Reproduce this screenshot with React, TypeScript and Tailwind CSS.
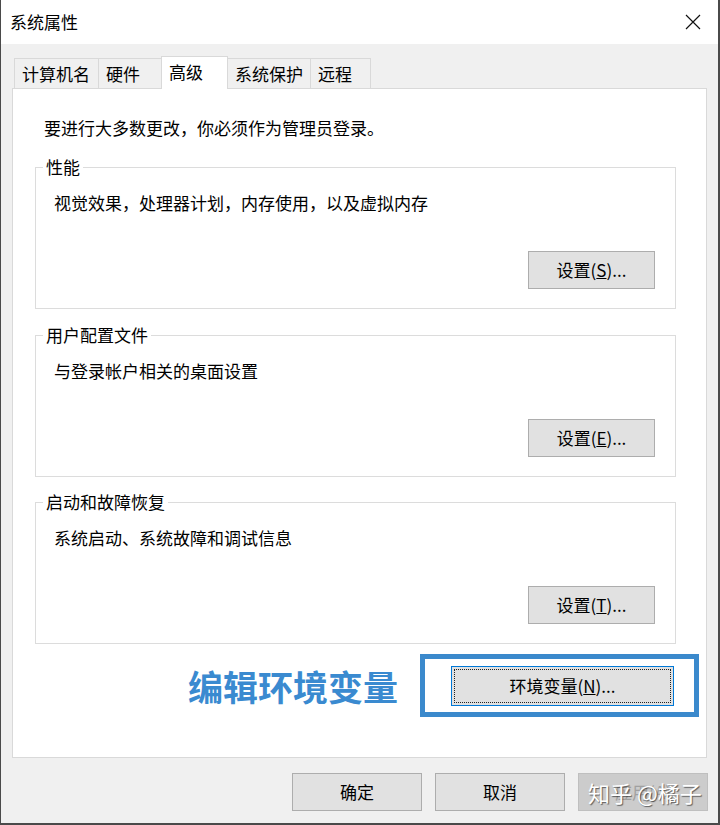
import type { ReactNode } from 'react';

const FONT = { fontFamily: '"Microsoft YaHei UI", "Noto Sans CJK SC", "Noto Sans", sans-serif' };

const tabs = [
  { label: '计算机名', w: 'w-[85px]' },
  { label: '硬件', w: 'w-[64px]' },
  { label: '高级', w: 'w-[67px]', active: true },
  { label: '系统保护', w: 'w-[84px]' },
  { label: '远程', w: 'w-[61px]' },
];

function Btn({ children, className = '' }: { children: ReactNode; className?: string }) {
  return (
    <button className={`flex items-center justify-center bg-[#e1e1e1] border border-[#adadad] text-[17px] leading-[22px] text-black ${className}`}>
      {children}
    </button>
  );
}

function Group({ title, desc, btn, keyChar }: { title: string; desc: string; btn: string; keyChar: string }) {
  return (
    <fieldset className="ml-[22px] w-[641px] border border-[#dcdcdc] pl-[7px] pr-[20px] pb-[19px]">
      <legend className="px-[3px] text-[17px] leading-[22px]">{title}</legend>
      <div className="mt-[14px] ml-[11px] text-[17px] leading-[22px]">{desc}</div>
      <div className="mt-[37px] flex justify-end">
        <Btn className="w-[127px] h-[38px]">
          {btn}(<u>{keyChar}</u>)...
        </Btn>
      </div>
    </fieldset>
  );
}

export default function App() {
  return (
    <div
      className="w-[720px] h-[825px] flex flex-col bg-[#f0f0f0] border-l border-r-2 border-b-2 border-[#4a4a4a] text-black overflow-hidden"
      style={FONT}
    >
      {/* title bar */}
      <div className="h-[44px] bg-white flex items-center justify-between pl-[9px] pr-[17px]">
        <span className="text-[17px] leading-[22px]">系统属性</span>
        <svg width="16" height="16" viewBox="0 0 16 16">
          <path d="M1 1 L15 15 M15 1 L1 15" stroke="#111" strokeWidth="1.2" fill="none" />
        </svg>
      </div>

      {/* tabs */}
      <div className="h-[44px] pt-[12px] pl-[13px] flex items-end">
        {tabs.map((t, i) => (
          <div
            key={t.label}
            className={`${t.w} ${i > 0 ? '-ml-px' : ''} ${
              t.active
                ? 'h-[33px] -mb-px bg-white relative z-10 pt-[4px]'
                : 'h-[30px] bg-[#f0f0f0] pt-[4px]'
            } border-t border-l border-r border-[#d9d9d9] pl-[7px] text-[17px] leading-[22px] whitespace-nowrap`}
          >
            {t.label}
          </div>
        ))}
      </div>

      {/* panel */}
      <div className="ml-[11px] w-[695px] h-[670px] bg-white border border-[#d9d9d9] flex flex-col">
        <div className="mt-[28px] ml-[31px] text-[17px] leading-[22px]">要进行大多数更改，你必须作为管理员登录。</div>
        <div className="mt-[17px]">
          <Group title="性能" desc="视觉效果，处理器计划，内存使用，以及虚拟内存" btn="设置" keyChar="S" />
        </div>
        <div className="mt-[15px]">
          <Group title="用户配置文件" desc="与登录帐户相关的桌面设置" btn="设置" keyChar="E" />
        </div>
        <div className="mt-[14px]">
          <Group title="启动和故障恢复" desc="系统启动、系统故障和调试信息" btn="设置" keyChar="T" />
        </div>

        <div className="mt-[10px] pr-[7px] flex items-center justify-end gap-[22px]">
          <span className="text-[35px] leading-[44px] font-bold text-[#3a8ad0]">编辑环境变量</span>
          <div className="w-[279px] h-[63px] border-[5px] border-[#3b89cc] flex items-center pl-[26px]">
            <button className="w-[223px] h-[40px] bg-[#e1e1e1] border border-[#0078d7] p-[2px]">
              <span className="flex h-full w-full items-center justify-center border border-dotted border-[#222] text-[17px] leading-[22px]">
                环境变量(<u>N</u>)...
              </span>
            </button>
          </div>
        </div>
      </div>

      {/* bottom buttons */}
      <div className="mt-[15px] pr-[10px] flex justify-end gap-[13px]">
        <Btn className="w-[130px] h-[38px]">确定</Btn>
        <Btn className="w-[130px] h-[38px]">取消</Btn>
        <div className="relative">
          <button className="w-[130px] h-[38px] bg-[#cccccc] border border-[#bfbfbf] text-[17px] leading-[22px] text-[#a0a0a0]">
            应用(A)
          </button>
          <span className="absolute left-[10px] top-[6px] text-[22px] leading-[26px] text-white whitespace-nowrap [text-shadow:1px_1px_1px_rgba(0,0,0,0.55)]">
            知乎 @橘子
          </span>
        </div>
      </div>
    </div>
  );
}
